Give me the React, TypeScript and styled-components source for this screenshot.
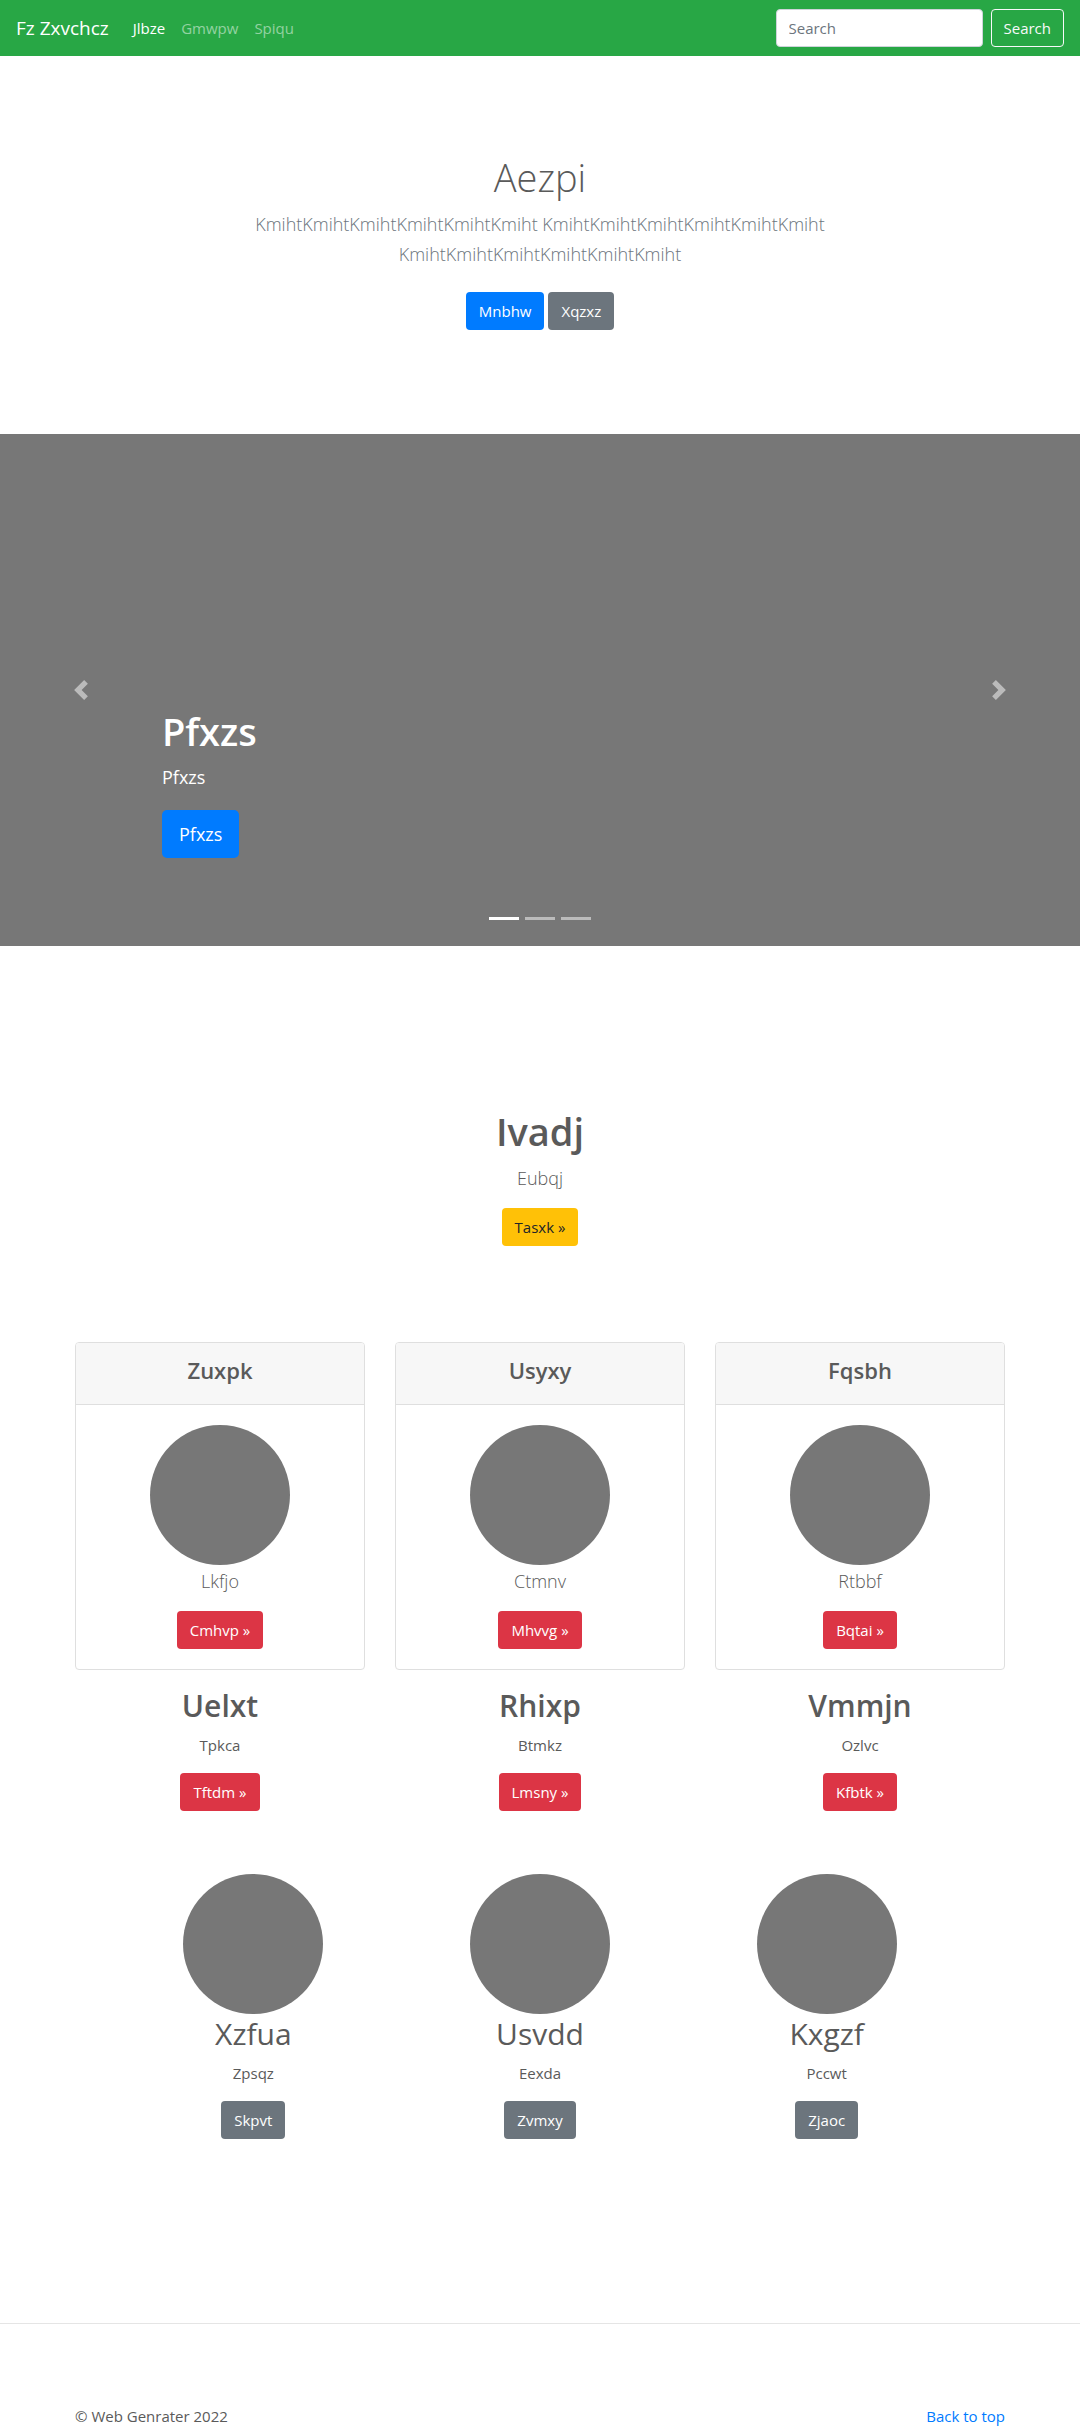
import React from "react";
import styled, { createGlobalStyle, css } from "styled-components";

const GlobalStyle = createGlobalStyle`
  *, *::before, *::after { box-sizing: border-box; }
  body {
    margin: 0;
    background: #fff;
    color: #5a5a5a;
    font-family: "Open Sans", "Noto Sans", sans-serif;
    font-size: 15px;
    line-height: 24px;
  }
  h1, h2, h3, p, ul { margin: 0; padding: 0; }
  a { color: #007bff; text-decoration: none; }
`;

const tones = {
  primary: { background: "#007bff", color: "#fff" },
  secondary: { background: "#6c757d", color: "#fff" },
  warning: { background: "#ffc107", color: "#212529" },
  danger: { background: "#dc3545", color: "#fff" },
};

type Tone = keyof typeof tones;

const buttonBase = css`
  display: inline-block;
  padding: 6px 12px;
  border: 1px solid transparent;
  border-radius: 4px;
  font: inherit;
  text-align: center;
  white-space: nowrap;
  cursor: pointer;
`;

const ButtonLink = styled.a<{ $tone: Tone; $large?: boolean }>`
  ${buttonBase}
  background: ${(p) => tones[p.$tone].background};
  color: ${(p) => tones[p.$tone].color};
  ${(p) =>
    p.$large &&
    css`
      padding: 8px 16px;
      border-radius: 5px;
      font-size: 18px;
      line-height: 30px;
    `}
`;

const Navbar = styled.header`
  display: flex;
  align-items: center;
  min-height: 56px;
  padding: 8px 16px;
  background: #28a745;
`;

const Brand = styled.a`
  margin-right: 16px;
  color: #fff;
  font-size: 19px;
  line-height: 30px;
`;

const NavLinks = styled.nav`
  display: flex;
  flex: 1;
`;

const NavLink = styled.a<{ $active?: boolean }>`
  padding: 8px;
  color: ${(p) => (p.$active ? "#fff" : "rgba(255, 255, 255, 0.5)")};
`;

const SearchForm = styled.form`
  display: flex;
  gap: 8px;
`;

const SearchInput = styled.input`
  width: 207px;
  height: 38px;
  padding: 6px 12px;
  border: 1px solid #ced4da;
  border-radius: 4px;
  background: #fff;
  color: #495057;
  font: inherit;
  &::placeholder { color: #6c757d; opacity: 1; }
`;

const SearchButton = styled.button`
  ${buttonBase}
  border-color: #f8f9fa;
  background: transparent;
  color: #f8f9fa;
`;

const Title = styled.h1<{ $light?: boolean }>`
  margin-bottom: 6px;
  font-size: 38px;
  line-height: 50px;
  font-weight: ${(p) => (p.$light ? 300 : 600)};
`;

const Subtitle = styled.h2<{ $regular?: boolean }>`
  margin-bottom: 7px;
  font-size: 30px;
  line-height: 40px;
  font-weight: ${(p) => (p.$regular ? 400 : 600)};
`;

const Lead = styled.p<{ $muted?: boolean }>`
  margin-bottom: 15px;
  padding-top: 1px;
  font-size: 18px;
  line-height: 30px;
  font-weight: 300;
  color: ${(p) => (p.$muted ? "#6c757d" : "inherit")};
`;

const CaptionText = styled.p`
  margin-bottom: 18px;
  font-size: 18px;
  line-height: 30px;
`;

const Text = styled.p`
  margin-bottom: 16px;
`;

const Hero = styled.section`
  padding: 96px 16px 104px;
  text-align: center;
`;

const HeroInner = styled.div`
  max-width: 640px;
  margin: 0 auto;
`;

const HeroActions = styled.div`
  display: flex;
  justify-content: center;
  gap: 4px;
  padding-top: 8px;
`;

const Carousel = styled.section`
  position: relative;
  display: flex;
  flex-direction: column;
  justify-content: flex-end;
  min-height: 512px;
  padding: 0 15% 88px;
  background: #777;
  color: #fff;
`;

const CarouselControl = styled.button<{ $side: "left" | "right" }>`
  position: absolute;
  top: 0;
  bottom: 0;
  ${(p) => p.$side}: 0;
  display: flex;
  align-items: center;
  justify-content: center;
  width: 15%;
  padding: 0;
  border: 0;
  background: none;
  color: #fff;
  opacity: 0.5;
  cursor: pointer;
`;

const Indicators = styled.div`
  position: absolute;
  right: 15%;
  bottom: 16px;
  left: 15%;
  display: flex;
  justify-content: center;
  gap: 6px;
`;

const Indicator = styled.button<{ $active?: boolean }>`
  width: 30px;
  height: 23px;
  padding: 0;
  border: 0 solid transparent;
  border-width: 10px 0;
  background: #fff;
  background-clip: padding-box;
  opacity: ${(p) => (p.$active ? 1 : 0.5)};
  cursor: pointer;
`;

const Intro = styled.section`
  padding: 160px 16px 96px;
  text-align: center;
`;

const Container = styled.div`
  max-width: 960px;
  margin: 0 auto;
  padding: 0 15px;
`;

const CardRow = styled.div`
  display: grid;
  grid-template-columns: repeat(3, 1fr);
  gap: 30px;
  text-align: center;
`;

const Card = styled.article`
  border: 1px solid #dfdfdf;
  border-radius: 4px;
  background: #fff;
`;

const CardHeader = styled.header`
  padding: 13px 20px 19px;
  border-bottom: 1px solid #dfdfdf;
  border-radius: 3px 3px 0 0;
  background: #f7f7f7;
`;

const CardTitle = styled.h3`
  font-size: 22px;
  line-height: 29px;
  font-weight: 600;
`;

const CardBody = styled.div`
  padding: 20px;
`;

const Avatar = styled.div`
  width: 140px;
  height: 140px;
  margin: 0 auto;
  border-radius: 50%;
  background: #777;
`;

const TextRow = styled(CardRow)`
  padding: 16px 0 63px;
`;

const ProfileRow = styled(CardRow)`
  gap: 0;
  padding: 0 35px 184px;
`;

const Footer = styled.footer`
  padding-top: 80px;
  border-top: 1px solid #e5e5e5;
`;

const FooterInner = styled(Container)`
  display: flex;
  justify-content: space-between;
`;

const cards = [
  { title: "Zuxpk", text: "Lkfjo", action: "Cmhvp »" },
  { title: "Usyxy", text: "Ctmnv", action: "Mhvvg »" },
  { title: "Fqsbh", text: "Rtbbf", action: "Bqtai »" },
];

const features = [
  { title: "Uelxt", text: "Tpkca", action: "Tftdm »" },
  { title: "Rhixp", text: "Btmkz", action: "Lmsny »" },
  { title: "Vmmjn", text: "Ozlvc", action: "Kfbtk »" },
];

const profiles = [
  { title: "Xzfua", text: "Zpsqz", action: "Skpvt" },
  { title: "Usvdd", text: "Eexda", action: "Zvmxy" },
  { title: "Kxgzf", text: "Pccwt", action: "Zjaoc" },
];

function Chevron({ side }: { side: "left" | "right" }) {
  return (
    <svg width="20" height="20" viewBox="0 0 8 8" fill="currentColor" aria-hidden="true">
      {side === "left" ? (
        <path d="M5.25 0l-4 4 4 4 1.5-1.5L4.25 4l2.5-2.5L5.25 0z" />
      ) : (
        <path d="M2.75 0l-1.5 1.5L3.75 4l-2.5 2.5L2.75 8l4-4-4-4z" />
      )}
    </svg>
  );
}

export default function App() {
  return (
    <>
      <GlobalStyle />
      <Navbar id="top">
        <Brand href="#top">Fz Zxvchcz</Brand>
        <NavLinks>
          <NavLink href="#top" $active>Jlbze</NavLink>
          <NavLink href="#intro">Gmwpw</NavLink>
          <NavLink href="#profiles">Spiqu</NavLink>
        </NavLinks>
        <SearchForm role="search" onSubmit={(e) => e.preventDefault()}>
          <SearchInput type="search" placeholder="Search" aria-label="Search" />
          <SearchButton type="submit">Search</SearchButton>
        </SearchForm>
      </Navbar>

      <main>
        <Hero>
          <HeroInner>
            <Title $light>Aezpi</Title>
            <Lead $muted>
              KmihtKmihtKmihtKmihtKmihtKmiht KmihtKmihtKmihtKmihtKmihtKmiht
              KmihtKmihtKmihtKmihtKmihtKmiht
            </Lead>
            <HeroActions>
              <ButtonLink href="#intro" $tone="primary">Mnbhw</ButtonLink>
              <ButtonLink href="#profiles" $tone="secondary">Xqzxz</ButtonLink>
            </HeroActions>
          </HeroInner>
        </Hero>

        <Carousel>
          <Title>Pfxzs</Title>
          <CaptionText>Pfxzs</CaptionText>
          <div>
            <ButtonLink href="#intro" $tone="primary" $large>Pfxzs</ButtonLink>
          </div>
          <Indicators>
            <Indicator type="button" aria-label="Slide 1" $active />
            <Indicator type="button" aria-label="Slide 2" />
            <Indicator type="button" aria-label="Slide 3" />
          </Indicators>
          <CarouselControl type="button" aria-label="Previous" $side="left">
            <Chevron side="left" />
          </CarouselControl>
          <CarouselControl type="button" aria-label="Next" $side="right">
            <Chevron side="right" />
          </CarouselControl>
        </Carousel>

        <Intro id="intro">
          <Title>Ivadj</Title>
          <Lead>Eubqj</Lead>
          <ButtonLink href="#profiles" $tone="warning">Tasxk »</ButtonLink>
        </Intro>

        <Container>
          <CardRow>
            {cards.map((c) => (
              <Card key={c.title}>
                <CardHeader>
                  <CardTitle>{c.title}</CardTitle>
                </CardHeader>
                <CardBody>
                  <Avatar />
                  <Lead>{c.text}</Lead>
                  <ButtonLink href="#top" $tone="danger">{c.action}</ButtonLink>
                </CardBody>
              </Card>
            ))}
          </CardRow>
          <TextRow>
            {features.map((f) => (
              <div key={f.title}>
                <Subtitle>{f.title}</Subtitle>
                <Text>{f.text}</Text>
                <ButtonLink href="#top" $tone="danger">{f.action}</ButtonLink>
              </div>
            ))}
          </TextRow>
          <ProfileRow id="profiles">
            {profiles.map((p) => (
              <div key={p.title}>
                <Avatar />
                <Subtitle $regular>{p.title}</Subtitle>
                <Text>{p.text}</Text>
                <ButtonLink href="#top" $tone="secondary">{p.action}</ButtonLink>
              </div>
            ))}
          </ProfileRow>
        </Container>
      </main>

      <Footer>
        <FooterInner>
          <p>© Web Genrater 2022</p>
          <a href="#top">Back to top</a>
        </FooterInner>
      </Footer>
    </>
  );
}
